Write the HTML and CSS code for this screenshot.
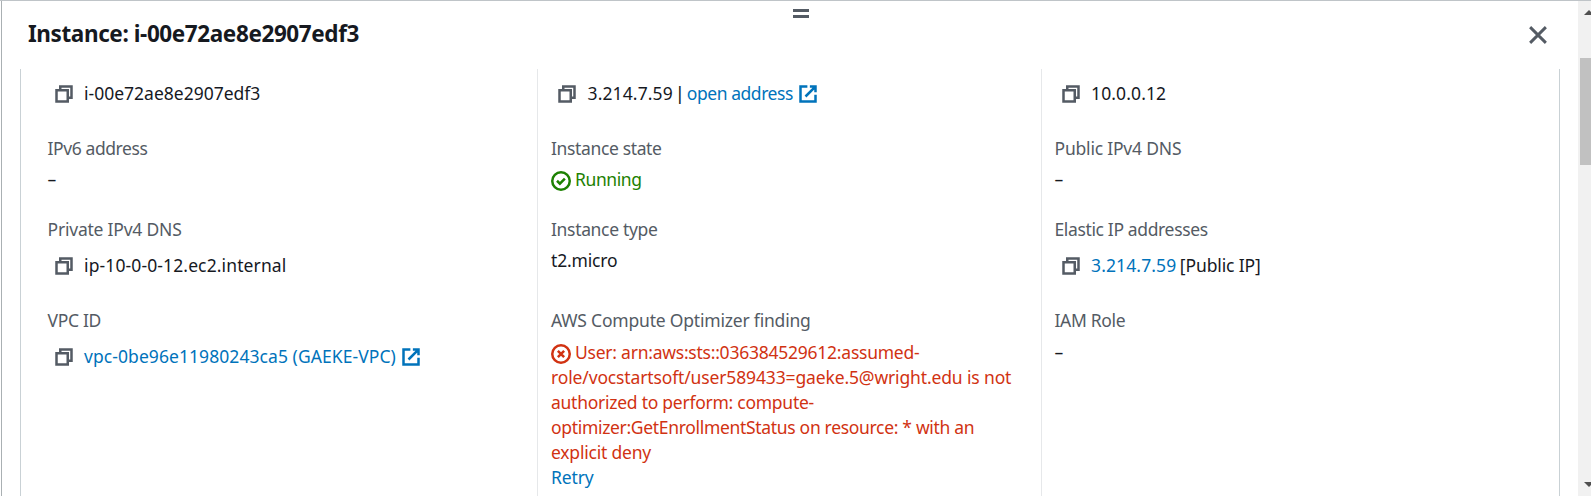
FILE: index.html
```
<!DOCTYPE html>
<html lang="en">
<head>
<meta charset="utf-8">
<title>Instance details</title>
<link rel="stylesheet" href="styles.css">
</head>
<body>
<svg class="defs" aria-hidden="true">
  <symbol id="copy" viewBox="0 0 16 16"><path d="M2 5h9v9H2zM5 5V2h9v9h-3"/></symbol>
  <symbol id="external" viewBox="0 0 16 16"><path d="M7.5 2H2v12h12V8.5M9.5 2H14v4.5M6 10l7.5-7.5"/></symbol>
  <symbol id="ok" viewBox="0 0 16 16"><circle cx="8" cy="8" r="7"/><path d="M4.8 7.8l2.3 2.3 4-4"/></symbol>
  <symbol id="error" viewBox="0 0 16 16"><circle cx="8" cy="8" r="7"/><path d="M5.5 5.5l5 5M10.5 5.5l-5 5"/></symbol>
  <symbol id="close" viewBox="0 0 16 16"><path d="M1.7 1.7l12.6 12.6M14.3 1.7L1.7 14.3"/></symbol>
</svg>
<div class="panel">
  <main class="main">
    <div class="handle"><i></i><i></i></div>
    <header class="header">
      <h2 class="title">Instance: i-00e72ae8e2907edf3</h2>
      <svg class="close"><use href="#close"/></svg>
    </header>
    <div class="details">
      <section class="col">
        <div class="copyable first"><svg class="icon"><use href="#copy"/></svg><span>i-00e72ae8e2907edf3</span></div>
        <div class="field">
          <div class="label t40">IPv6 address</div>
          <div class="value dash">–</div>
        </div>
        <div class="field">
          <div class="label t21">Private IPv4 DNS</div>
          <div class="copyable"><svg class="icon"><use href="#copy"/></svg><span class="w12">ip-10-0-0-12.ec2.internal</span></div>
        </div>
        <div class="field">
          <div class="label t31">VPC ID</div>
          <div class="copyable"><svg class="icon"><use href="#copy"/></svg><a class="w7">vpc-0be96e11980243ca5 (GAEKE-VPC)</a><svg class="icon ext"><use href="#external"/></svg></div>
        </div>
      </section>
      <section class="col">
        <div class="copyable first"><svg class="icon"><use href="#copy"/></svg><span class="w12">3.214.7.59</span><span class="bar">|</span><a class="t45">open address</a><svg class="icon ext"><use href="#external"/></svg></div>
        <div class="field">
          <div class="label t36">Instance state</div>
          <div class="value ok"><svg class="icon status"><use href="#ok"/></svg><span class="t40">Running</span></div>
        </div>
        <div class="field">
          <div class="label t33">Instance type</div>
          <div class="value t16">t2.micro</div>
        </div>
        <div class="field">
          <div class="label t19">AWS Compute Optimizer finding</div>
          <div class="value error"><svg class="icon status"><use href="#error"/></svg><span class="t24">User: arn:aws:sts::036384529612:assumed-</span><br><span class="t14">role/vocstartsoft/user589433=gaeke.5@wright.edu is not</span><br><span class="t26">authorized to perform: compute-</span><br><span class="t31">optimizer:GetEnrollmentStatus on resource: * with an</span><br><span class="t21">explicit deny</span><br><a class="t14">Retry</a></div>
        </div>
      </section>
      <section class="col">
        <div class="copyable first"><svg class="icon"><use href="#copy"/></svg><span class="w12">10.0.0.12</span></div>
        <div class="field">
          <div class="label t19">Public IPv4 DNS</div>
          <div class="value dash">–</div>
        </div>
        <div class="field">
          <div class="label t36">Elastic IP addresses</div>
          <div class="copyable"><svg class="icon"><use href="#copy"/></svg><a class="w12">3.214.7.59</a><span class="tag">[Public IP]</span></div>
        </div>
        <div class="field">
          <div class="label t31">IAM Role</div>
          <div class="value dash last">–</div>
        </div>
      </section>
    </div>
  </main>
  <aside class="scrollbar">
    <svg class="arrow" viewBox="0 0 7 5"><path d="M0 5L5 0l2 2v3z"/></svg>
    <div class="thumb"></div>
    <svg class="arrow down" viewBox="0 0 7 5"><path d="M0 0h7v3L5 5z"/></svg>
  </aside>
</div>
</body>
</html>
```
FILE: styles.css
```
* { box-sizing: border-box; }
body {
  margin: 0;
  font: 17.5px/25px "Noto Sans", "Open Sans", sans-serif;
  color: #16191f;
  background: #fff;
}
.defs { position: absolute; width: 0; height: 0; }

.panel {
  display: flex;
  height: 496px;
  overflow: hidden;
  border-top: 1px solid #bfc4c8;
  padding-left: 1px;
}
.main {
  flex: 1;
  min-width: 0;
  display: flex;
  flex-direction: column;
  border-left: 1px solid #aab0b3;
}
.handle {
  height: 19px;
  padding: 8px 0 0 791px;
  display: flex;
  flex-direction: column;
  gap: 3.5px;
}
.handle i { width: 16px; height: 2.5px; flex: none; background: #545b64; }
.header {
  height: 49px;
  flex: none;
  display: flex;
  justify-content: space-between;
  padding: 0 30px 0 26px;
}
.title {
  margin: 0;
  font-size: 22.5px;
  line-height: 28px;
  font-weight: 700;
  letter-spacing: -0.4px;
  white-space: nowrap;
}
.close { width: 20px; height: 20px; margin-top: 5px; color: #545b64; }

.details {
  flex: 1;
  display: grid;
  grid-template-columns: 516px 504px 1fr;
  margin: 0 18px 0 18px;
  border: solid #c9d1d5;
  border-width: 0 1px;
}
.col { padding: 12px 0 0 26.5px; white-space: nowrap; }
.col + .col { border-left: 1px solid #e6e8ea; padding-left: 13px; }
.col:nth-child(3) { padding-left: 12.5px; }

.field { height: 81px; }
.field:nth-child(3) { height: 91px; }
.label { color: #545b64; margin-bottom: 6px; }
.value { height: 25px; }
.dash.last { margin-top: 7px; }
.copyable {
  display: flex;
  align-items: center;
  height: 25px;
  padding-left: 6px;
  margin-top: 11px;
}
.first { margin: 0 0 30px; }
.copyable .icon:first-child { margin-right: 10.5px; }
.field .copyable .icon { margin-top: 1px; }

svg { fill: none; stroke: currentColor; stroke-width: 2; }
.close { stroke-width: 2.3; }
.icon { width: 20px; height: 20px; flex: none; color: #545b64; }
.icon.ext { color: #0073bb; margin-left: 5px; }
.icon.status { color: inherit; vertical-align: -5px; margin-right: 4px; }
.ok { color: #1d8102; }
.error { color: #d13212; margin-top: 7px; }
a { color: #0073bb; }
.bar { width: 10px; margin: 0 2px; text-align: center; font-weight: 500; }
.tag { margin-left: 3.5px; letter-spacing: -0.12px; }

/* Tracking steps, in hundredths of a pixel: t tightens, w widens */
.t14 { letter-spacing: -0.14px; }
.t16 { letter-spacing: -0.16px; }
.t19 { letter-spacing: -0.2px; }
.t21 { letter-spacing: -0.21px; }
.t24 { letter-spacing: -0.24px; }
.t26 { letter-spacing: -0.26px; }
.t31 { letter-spacing: -0.32px; }
.t33 { letter-spacing: -0.33px; }
.t36 { letter-spacing: -0.36px; }
.t40 { letter-spacing: -0.4px; }
.t45 { letter-spacing: -0.45px; }
.w7 { letter-spacing: 0.07px; }
.w12 { letter-spacing: 0.12px; }

.scrollbar {
  width: 13px;
  flex: none;
  display: flex;
  flex-direction: column;
  align-items: flex-end;
  background: #f1f1f1;
  padding: 9px 0 9px;
}
.arrow { width: 7px; height: 5px; fill: #505050; stroke: none; }
.thumb { width: 11px; height: 107px; margin-top: 43px; background: #c1c1c1; }
.down { margin-top: auto; }
```
